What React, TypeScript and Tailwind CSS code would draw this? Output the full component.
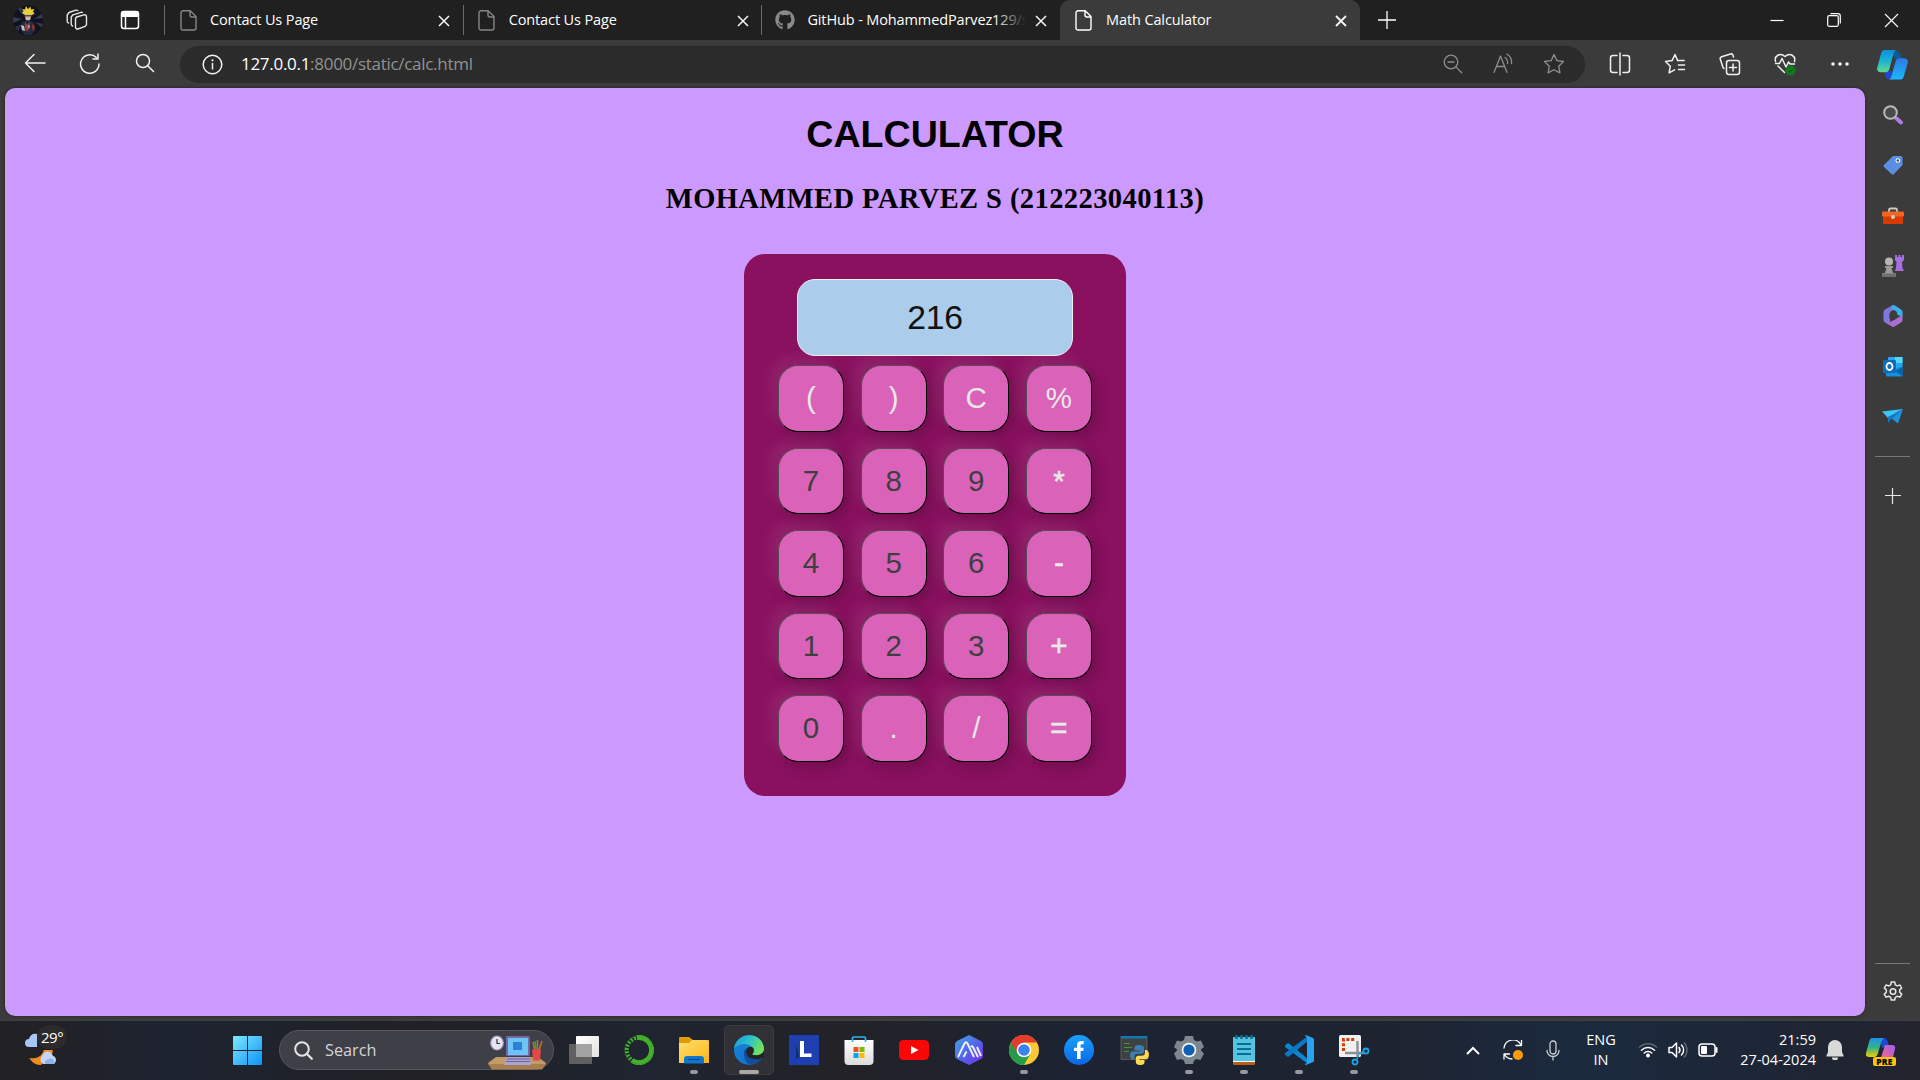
import React from "react";
import { FaGithub } from "react-icons/fa";

type Box = { w?: number; h?: number; vb?: string; className?: string; children?: React.ReactNode };

function Svg({ w = 24, h, vb, className = "", children }: Box) {
  const height = h ?? w;
  return (
    <svg
      width={w}
      height={height}
      viewBox={vb ?? `0 0 ${w} ${height}`}
      className={`shrink-0 ${className}`}
      fill="none"
      stroke="none"
    >
      {children}
    </svg>
  );
}

const line = { stroke: "currentColor", strokeWidth: 1.5, strokeLinecap: "round", strokeLinejoin: "round" } as const;

/* ---------- Tab strip ---------- */

function Avatar() {
  return (
    <Svg w={30} h={37}>
      <clipPath id="av"><ellipse cx="15" cy="18.500" rx="15" ry="15.200" /></clipPath>
      <g clipPath="url(#av)">
        <rect width="30" height="37" fill="#10121d" />
        <g transform="translate(0 3)">
          <path d="M0 12l9 2-9 4zM30 8l-9 6 9-1zM30 19l-8-2 8 7zM4 3l7 8-3-9z" fill="#333b52" />
          <path d="M2 22l7-3-4 8z" fill="#2a3146" />
          <path d="M9 8l1.500-2L9 4l3 .6L13 1l2 3 2.500-2.500.5 3 3.500-.5-1.500 2.500 1.500 2.500-3 1-1 2h-5l-1-2.500z" fill="#e8cf3c" />
          <path d="M12 10h6l-.5 4.500-2.500 1.500-2.500-1.500z" fill="#d8b79c" />
          <path d="M11.500 10h7v1.500h-7z" fill="#3c4a6e" />
          <path d="M9 17l4-1.500h4l4 2 1 8-4 5h-6l-4-5z" fill="#232a42" />
          <path d="M12 17l2 3 3-3-1 7-2 3-2-4z" fill="#9a4440" />
          <path d="M8 20l3 1 1 5-3-1zM15 20l2 1-1 3z" fill="#cfc3bd" />
          <path d="M19 19l3 2-1 5-2-2z" fill="#8a2f2f" />
        </g>
      </g>
    </Svg>
  );
}

function Workspaces() {
  return (
    <Svg w={22} h={24} vb="0 0 22 22" className="text-[#e6e6e6]">
      <g {...line} strokeWidth={1.400}>
        <path d="M10.500 8l7.500-2.200a2 2 0 0 1 2.500 1.900v8.100l-1.500 1.600-7 2.600a2 2 0 0 1-2.500-1.900V9.500z" />
        <path d="M6.500 17a2 2 0 0 1-1.300-1.900V8L7 5.800l8-2.500a2 2 0 0 1 1.500.2" />
        <path d="M2.500 14a2 2 0 0 1-1.300-1.800V6L3 3.500 10 1.200a2 2 0 0 1 1.800.3" />
      </g>
    </Svg>
  );
}

function TabActions() {
  return (
    <Svg w={20} h={20} className="text-white">
      <rect x="1.500" y="1.500" width="17" height="17" rx="2.500" {...line} />
      <path d="M1 3.500A2.500 2.500 0 0 1 3.500 1h13A2.500 2.500 0 0 1 19 3.500V7H1z" fill="currentColor" />
      <path d="M5.500 7v11" {...line} />
    </Svg>
  );
}

function PageIcon({ className = "text-[#858585]" }: { className?: string }) {
  return (
    <Svg w={17} h={21} className={className}>
      <path
        d="M3 .8h7.200L16 6.600V18a2 2 0 0 1-2 2H3a2 2 0 0 1-2-2V2.800a2 2 0 0 1 2-2zM10 1v4a2 2 0 0 0 2 2h4"
        {...line}
        strokeWidth={1.400}
      />
    </Svg>
  );
}

function Cross({ size = 10, width = 1.5 }: { size?: number; width?: number }) {
  return (
    <Svg w={size} h={size} vb="0 0 10 10" className="overflow-visible text-[#f5f5f5]">
      <path d="M0 0l10 10M10 0L0 10" stroke="currentColor" strokeWidth={(width * 10) / size} />
    </Svg>
  );
}

function Tab({ title, icon, fade }: { title: string; icon: React.ReactNode; fade?: boolean }) {
  return (
    <div className="flex h-10 w-[298.700px] items-center">
      <div className="h-[30px] w-px bg-[#6a6a6a]" />
      <div className="ml-[13px] flex w-5 justify-center">{icon}</div>
      <div className="relative ml-[12px] w-[219px] overflow-hidden whitespace-nowrap text-[14.500px] leading-5 tracking-[-0.120px] text-white">
        {title}
        {fade && <div className="absolute inset-y-0 right-0 w-8 bg-gradient-to-r from-transparent to-[#202020]" />}
      </div>
      <div className="ml-[10px] mt-[2px]">
        <Cross />
      </div>
    </div>
  );
}

function TabStrip() {
  return (
    <div className="flex h-10 items-center bg-[#202020]">
      <div className="flex h-10 w-[164px] items-center">
        <div className="ml-[13px]"><Avatar /></div>
        <div className="ml-[23px]"><Workspaces /></div>
        <div className="ml-[32px]"><TabActions /></div>
      </div>
      <Tab title="Contact Us Page" icon={<PageIcon />} />
      <Tab title="Contact Us Page" icon={<PageIcon />} />
      <Tab title="GitHub - MohammedParvez129/s" fade icon={<FaGithub size={20} className="text-[#8a8a8a]" />} />
      <div className="flex items-end self-stretch bg-[#3b3b3b]">
        <div className="flex h-10 w-[300px] items-center rounded-t-[10px] bg-[#3b3b3b] shadow-[0_-10px_0_#202020]">
          <div className="ml-[15px]"><PageIcon className="text-white" /></div>
          <div className="ml-[14px] w-[224px] whitespace-nowrap text-[14.500px] leading-5 tracking-[-0.120px] text-white">
            Math Calculator
          </div>
          <div className="ml-[6px] mt-[2px]"><Cross width={1.8} /></div>
        </div>
      </div>
      <div className="flex h-10 flex-1 items-center rounded-bl-[10px] bg-[#202020]">
        <div className="ml-[18px]">
          <Svg w={18} h={18} className="text-white"><path d="M9 0v18M0 9h18" stroke="currentColor" strokeWidth="1.300" /></Svg>
        </div>
        <div className="flex-1" />
        <Svg w={14} h={14} className="text-white"><path d="M0.500 7.500h13" stroke="currentColor" strokeWidth="1.200" /></Svg>
        <Svg w={14} h={14} className="ml-[43px] text-white">
          <rect x=".7" y="2.700" width="10.600" height="10.600" rx="1.500" stroke="currentColor" strokeWidth="1.200" />
          <path d="M3.500.7h7.500a2.300 2.300 0 0 1 2.300 2.300v7.500" stroke="currentColor" strokeWidth="1.200" />
        </Svg>
        <div className="ml-[44px] mr-[22px]"><Cross size={13} width={1.200} /></div>
      </div>
    </div>
  );
}

/* ---------- Address bar ---------- */

function Cell({ children }: { children: React.ReactNode }) {
  return <div className="flex w-[55px] justify-center">{children}</div>;
}

function CopilotLogo({ size = 32 }: { size?: number }) {
  return (
    <Svg w={size} vb="0 0 32 32">
      <defs>
        <linearGradient id="cp1" x1="0" y1="0" x2="0" y2="1">
          <stop offset="0" stopColor="#0c8fe0" /><stop offset=".5" stopColor="#1db4d4" /><stop offset="1" stopColor="#62d88f" />
        </linearGradient>
        <linearGradient id="cp2" x1="0" y1="0" x2="0" y2="1">
          <stop offset="0" stopColor="#2f79e6" /><stop offset="1" stopColor="#18b8fb" />
        </linearGradient>
      </defs>
      <path d="M16 2h4c2.500 0 3.500 1 4 3l1.500 4.500-7 2z" fill="#0d5b94" />
      <path d="M8 23h8l-2.500 8H12c-2 0-3-2-3.500-3.500z" fill="#2346d8" />
      <path d="M7.500 1H20c-2 1-2.500 2-3 4l-4.300 16c-.7 2-2 3-4 3H4c-3 0-4.500-2-3.700-5L4 5.500C4.600 3 5.500 1 7.500 1z" fill="url(#cp1)" />
      <path d="M24.500 31.500H12c2-1 2.500-2 3-4l4.300-15c.7-2 2-3 4-3H28c3 0 4.500 2 3.700 5L28 27c-.6 2.500-1.500 4.500-3.500 4.500z" fill="url(#cp2)" />
    </Svg>
  );
}

const starPath = "M11 1.500l2.900 6.100 6.600.9-4.800 4.700 1.200 6.700L11 16.700l-5.900 3.200 1.200-6.700L1.500 8.500l6.600-.9z";

function AddressBar() {
  return (
    <div className="flex h-[48px] items-center bg-[#3b3b3b] text-[#f0f0f0]">
      <div className="ml-[7px] flex">
        <Cell>
          <Svg w={22} h={20}><path d="M21 10H1.500M10 1.500L1.500 10l8.500 8.500" {...line} /></Svg>
        </Cell>
        <Cell>
          <Svg w={22} h={22}><path d="M20 11a9.200 9.200 0 1 1-2.800-6.600M19 1v5h-5" {...line} /></Svg>
        </Cell>
        <Cell>
          <Svg w={20} h={20}><circle cx="8" cy="8" r="6.500" {...line} /><path d="M12.700 12.700l5.800 5.800" {...line} /></Svg>
        </Cell>
      </div>
      <div className="ml-[8px] flex h-[37px] w-[1405px] items-center rounded-full bg-[#2b2b2b]">
        <div className="ml-[22px]">
          <Svg w={21} h={21}>
            <circle cx="10.500" cy="10.500" r="9.300" {...line} />
            <path d="M10.500 9.500v5.500" {...line} /><circle cx="10.500" cy="6.300" r="1.100" fill="currentColor" />
          </Svg>
        </div>
        <div className="ml-[18px] flex-1 whitespace-nowrap text-[17px] leading-6 tracking-[-0.290px] text-[#929292]">
          <span className="text-white">127.0.0.1</span>:8000/static/calc.html
        </div>
        <div className="mr-[20px] flex items-center text-[#8d8d8d]">
          <Svg w={20} h={20}>
            <circle cx="8" cy="8" r="6.800" {...line} strokeWidth={1.300} />
            <path d="M12.900 12.900l5.800 5.800M5 8h6" {...line} strokeWidth={1.300} />
          </Svg>
          <Svg w={22} h={22} className="ml-[30px]">
            <path d="M1 19.500L7.500 3 14 19.500M3.500 13.500h8" {...line} strokeWidth={1.300} />
            <path d="M12 4.500a6 6 0 0 1 2.500 6M14 1a10 10 0 0 1 4.500 9.500" {...line} strokeWidth={1.300} />
          </Svg>
          <Svg w={22} h={22} className="ml-[28px]"><path d={starPath} {...line} strokeWidth={1.300} /></Svg>
        </div>
      </div>
      <div className="ml-[7px] flex items-center">
        <Cell>
          <Svg w={22} h={24}>
            <path d="M8 3.500H4A2.500 2.500 0 0 0 1.500 6v12A2.500 2.500 0 0 0 4 20.500h4M14 3.500h4A2.500 2.500 0 0 1 20.500 6v12a2.500 2.500 0 0 1-2.500 2.500h-4M11 1v22" {...line} />
          </Svg>
        </Cell>
        <Cell>
          <Svg w={22} h={22}>
            <path d="M13.700 7.600L11 1.500 8.100 7.600 1.500 8.500l4.800 4.700-1.200 6.700 5.500-3M13.700 7.600h6.500M14.500 12h6M14.500 16.500h6" {...line} />
          </Svg>
        </Cell>
        <Cell>
          <Svg w={22} h={23}>
            <rect x="7.500" y="7.500" width="13" height="14" rx="2.500" {...line} />
            <path d="M14 11v7M10.500 14.500h7M5 15.500l-1-1L1.300 6.300a2 2 0 0 1 1.300-2.500L11.500 1a2 2 0 0 1 2.500 1.300l.5 1.700" {...line} />
          </Svg>
        </Cell>
        <Cell>
          <Svg w={22} h={24}>
            <path d="M1.500 9.500C0 4 6 0 11 4.500 16 0 22 4 20.500 9.500M4 14l6.500 6.500M1.500 11.500h4l2.500-5 4 8.500 2.500-5 1.500 2h4.500" {...line} />
            <circle cx="16.500" cy="18.500" r="5" fill="#117a1b" />
            <path d="M14.500 19l1.300 1.300 2.700-3" stroke="#0b4a10" strokeWidth="1" />
          </Svg>
        </Cell>
        <Cell>
          <Svg w={18} h={4}>
            <circle cx="2" cy="2" r="1.800" fill="currentColor" /><circle cx="9" cy="2" r="1.800" fill="currentColor" /><circle cx="16" cy="2" r="1.800" fill="currentColor" />
          </Svg>
        </Cell>
      </div>
      <div className="ml-[10px]"><CopilotLogo size={31} /></div>
    </div>
  );
}

/* ---------- Calculator page ---------- */

const keys = ["(", ")", "C", "%", "7", "8", "9", "*", "4", "5", "6", "-", "1", "2", "3", "+", "0", ".", "/", "="];

function keyText(k: string) {
  if (/\d/.test(k)) return "text-[#3f3f3f]";
  return /[*+=-]/.test(k) ? "text-[#e8e8e8] [-webkit-text-stroke:0.6px_#e8e8e8]" : "text-[#e8e8e8]";
}

function Calculator() {
  return (
    <div className="mt-[38px] h-[542px] w-[382px] rounded-[21px] bg-[#8a1060] pt-[25px]">
      <div className="mx-auto flex h-[77px] w-[276px] items-center justify-center rounded-[18px] border border-[#f3eef6] bg-[#abccea] text-[33.750px] tracking-[-0.300px] text-[#111]">
        216
      </div>
      <div className="ml-[34px] mt-[9px] grid w-[314px] grid-cols-4 gap-x-[16.500px] gap-y-[16px]">
        {keys.map((k) => (
          <button
            key={k}
            className={`flex h-[66.500px] w-[66px] items-center justify-center rounded-[20px] border border-b-black border-l-[#5c4a58] border-r-black border-t-[#5c4a58] bg-[#da62b9] pb-px text-[29.500px] leading-none shadow-[-8px_-8px_15px_rgba(255,255,255,0.08),5px_5px_15px_rgba(0,0,0,0.2)] ${keyText(k)}`}
          >
            {k}
          </button>
        ))}
      </div>
    </div>
  );
}

function Page() {
  return (
    <main className="ml-[5px] flex h-[928px] w-[1860px] flex-col items-center rounded-[10px] bg-[#cc99ff] font-['Liberation_Sans',Arial,sans-serif] text-black shadow-[0_0_3px_rgba(0,0,0,0.5)]">
      <h1 className="mt-[25px] text-[37.600px] font-bold leading-[43px]">CALCULATOR</h1>
      <h2 className="mt-[26px] font-['Liberation_Serif','Times_New_Roman',serif] text-[28.500px] font-bold leading-[34px] tracking-[0.420px]">
        MOHAMMED PARVEZ S (212223040113)
      </h2>
      <Calculator />
    </main>
  );
}

/* ---------- Edge sidebar ---------- */

function SideItem({ children }: { children: React.ReactNode }) {
  return <div className="flex h-[50.300px] items-center pt-1">{children}</div>;
}

function Sidebar() {
  return (
    <aside className="flex w-[35px] flex-col items-center text-[#e8e8e8]">
      <SideItem>
        <Svg w={20} h={20}>
          <path d="M13.500 13.500l4.500 4" stroke="#b57ae6" strokeWidth="4" strokeLinecap="round" />
          <circle cx="7.500" cy="7.500" r="6.300" stroke="#b9b9b9" strokeWidth="2" fill="#4a4a4a" />
        </Svg>
      </SideItem>
      <SideItem>
        <Svg w={20} h={20}>
          <path d="M10 1h7.500A2 2 0 0 1 19.500 3v7L11 19a2 2 0 0 1-2.500 0L1 12a1.500 1.500 0 0 1 0-2z" fill="#5b8fe3" />
          <circle cx="14.800" cy="5.500" r="2.300" fill="#fff" /><circle cx="14.800" cy="5.500" r="1.200" fill="#444" />
        </Svg>
      </SideItem>
      <SideItem>
        <Svg w={22} h={18}>
          <path d="M7 5V3a1.500 1.500 0 0 1 1.500-1.500h5A1.500 1.500 0 0 1 15 3v2" stroke="#c9c9c9" strokeWidth="1.800" />
          <rect x="1" y="5" width="20" height="12" rx="1" fill="#d83b01" />
          <rect x="0" y="4.500" width="22" height="5" rx="1" fill="#f26522" />
          <circle cx="11" cy="10" r="2" fill="#cfcfcf" />
        </Svg>
      </SideItem>
      <SideItem>
        <Svg w={22} h={22}>
          <path d="M13 0h2v2h1.500V0h2v2H20V0h2v5l-2 2 .5 6 1.500 3h-9l1-3 .5-6-1.500-2z" fill="#a56fe0" />
          <circle cx="7" cy="6.500" r="4" fill="#b5b5b5" />
          <path d="M3 11h8v2H9.500l1.500 5h2a1 1 0 0 1 1 1v2a1 1 0 0 1-1 1H1a1 1 0 0 1-1-1v-2a1 1 0 0 1 1-1h2l1.500-5H3z" fill="#9a9a9a" />
          <path d="M0 18.500h14V21a1 1 0 0 1-1 1H1a1 1 0 0 1-1-1z" fill="#6f6f6f" />
        </Svg>
      </SideItem>
      <SideItem>
        <Svg w={20} h={22}>
          <path d="M10 0L2 4.500A3 3 0 0 0 .5 7v8a3 3 0 0 0 1.500 2.500l3 1.500c1 0 2-.5 2-2V8a2 2 0 0 1 1-1.700L12 4z" fill="#7f78dc" />
          <path d="M9 .5a3 3 0 0 1 3 0L18 4.500A3 3 0 0 1 19.500 7v5L14 9.500V8a2 2 0 0 0-1-1.700L8 3.500z" fill="#38b0e8" />
          <path d="M19.500 10v5a3 3 0 0 1-1.500 2.500L12 21.300a3 3 0 0 1-3.500 0L3 18c2 .5 4-.5 5-1.500l6-3.500z" fill="#a96fd0" />
          <path d="M10 6.500l4 2.200v4.600l-4 2.200-3.700-2.200V8.700z" fill="#3b3b3b" />
        </Svg>
      </SideItem>
      <SideItem>
        <Svg w={20} h={20}>
          <rect x="5" y="0" width="14.500" height="12" rx="1" fill="#28a8ea" />
          <rect x="12" y="0" width="7.500" height="6" fill="#50d9ff" />
          <path d="M3 9l8 3 8.500-3v9a1.500 1.500 0 0 1-1.500 1.500H4.500A1.500 1.500 0 0 1 3 18z" fill="#1490df" />
          <path d="M19.500 10v9L12 14z" fill="#0a5fa8" />
          <rect x="0" y="3" width="13" height="13" rx="1.200" fill="#0f6cbd" />
          <ellipse cx="6.500" cy="9.500" rx="3" ry="3.500" stroke="#fff" strokeWidth="1.800" />
        </Svg>
      </SideItem>
      <SideItem>
        <Svg w={21} h={16}>
          <path d="M0 2.500L21 0 6 9z" fill="#3cc4f4" /><path d="M21 0l-5 14.500L9 9z" fill="#1b93e0" /><path d="M21 0L6 8v6l3.500-4z" fill="#1277bd" />
        </Svg>
      </SideItem>
      <div className="mt-[16px] h-px w-[35px] bg-[#777]" />
      <Svg w={16} h={16} className="mt-[31px]"><path d="M7.500 0v16M0 7.500h16" stroke="currentColor" strokeWidth="1.200" /></Svg>
      <div className="flex-1" />
      <div className="h-px w-[35px] bg-[#777]" />
      <Svg w={22} h={22} className="mb-[17px] mt-[17px]">
        <path
          d="M9.300 1h3.400l.6 2.800 2 1.100 2.700-.9 1.700 3-2 1.900v2.300l2 1.900-1.700 3-2.700-.9-2 1.100-.6 2.700H9.300l-.6-2.700-2-1.100-2.700.9-1.700-3 2-1.900V8.900l-2-1.900L4 4l2.700.9 2-1.100z"
          {...line}
        />
        <circle cx="11" cy="10.500" r="2.800" {...line} />
      </Svg>
    </aside>
  );
}

/* ---------- Taskbar ---------- */

function Weather() {
  return (
    <div className="relative ml-[25px] h-[36px] w-[42px]">
      <Svg w={42} h={36}>
        <path d="M4 15a4 4 0 0 1 0-8c1-4 4-6 8-5v13z" fill="#a8c6f5" />
        <path d="M28 19A14 14 0 0 1 4 26c7 1 13-1 15-8z" fill="#f28a1c" />
        <path d="M28 18h-9a12 12 0 0 1-14 9 13 13 0 0 0 11 6z" fill="#f28a1c" />
        <path d="M18 32a5 5 0 0 1-1-8c2-6 9-6 11 0a4.200 4.200 0 0 1 0 8z" fill="#c3d6f8" />
        <path d="M20 32a4 4 0 0 1 4-5c3-2 6 1 5.500 5z" fill="#8fb2ea" />
      </Svg>
      <span className="absolute left-[12px] top-[-7px] rounded-full bg-[#2c2a2a] px-1 text-[15px] leading-[24px] tracking-[-0.500px] text-white">29°</span>
    </div>
  );
}

function SearchArt() {
  return (
    <Svg w={58} h={36}>
      <path d="M8 22h42l8 6-4 6H4l-4-6z" fill="#c49a68" /><path d="M0 29h58l-4 5.500H4z" fill="#a87f50" />
      <ellipse cx="9" cy="8" rx="6.300" ry="7" fill="#e7e4f2" stroke="#a29bc0" strokeWidth="1.200" /><path d="M9 4v4.500h3" stroke="#333" strokeWidth="1.200" />
      <rect x="18" y="1" width="24" height="20" rx="1.500" fill="#7468a8" /><rect x="20" y="3" width="20" height="17" fill="#6cc3f4" /><rect x="25" y="7" width="9" height="8" fill="#2b81d2" />
      <path d="M19 22h23l1 8H16z" fill="#aaa3cf" /><path d="M19 24h23M18 26.500h24" stroke="#6b6296" strokeWidth="1" />
      <path d="M47 16l-2-9M49.500 15V5M51 15l3-9" stroke="#b8742e" strokeWidth="1.600" /><path d="M48 14l-1-8" stroke="#3a9b58" strokeWidth="1.600" />
      <path d="M44 14.500h9l-1 11h-7z" fill="#e5484a" />
    </Svg>
  );
}

const taskIcons: { art: React.ReactNode; running?: boolean; active?: boolean }[] = [
  {
    art: (
      <Svg w={30} h={30}>
        <defs>
          <linearGradient id="tv1" x1="0" y1="0" x2="1" y2="1"><stop offset="0" stopColor="#fff" /><stop offset="1" stopColor="#e3e3e3" /></linearGradient>
        </defs>
        <rect x="0" y="9" width="23" height="20" rx="1" fill="#606060" />
        <rect x="7" y="1" width="23" height="21" rx="1" fill="url(#tv1)" />
        <rect x="7" y="9" width="16" height="13" fill="#a3a3a3" />
      </Svg>
    ),
  },
  {
    art: (
      <Svg w={30} h={30}>
        <path d="M13 2.600A12.600 12.600 0 1 1 8 25.500" stroke="#43b02a" strokeWidth="5" />
        <circle cx="15" cy="15" r="12.300" stroke="#43b02a" strokeWidth="4" strokeDasharray="2 1.500" />
        <circle cx="15" cy="15" r="14.200" stroke="#2f8f20" strokeWidth="1" strokeDasharray="1.500 2" />
      </Svg>
    ),
  },
  {
    running: true,
    art: (
      <Svg w={30} h={30}>
        <defs><linearGradient id="fo" x1="0" y1="0" x2="1" y2="1"><stop offset="0" stopColor="#ffdf70" /><stop offset="1" stopColor="#fbb615" /></linearGradient></defs>
        <path d="M0 3a1 1 0 0 1 1-1h9l4 3v6H0z" fill="#e09b08" />
        <path d="M0 8h10l3-3h16a1 1 0 0 1 1 1v22H0z" fill="url(#fo)" />
        <path d="M5 28.500V24a3 3 0 0 1 3-3h14a3 3 0 0 1 3 3v4.500z" fill="#1177cc" /><path d="M9 24.500h12" stroke="#0a4a8c" strokeWidth="1.200" />
      </Svg>
    ),
  },
  {
    active: true,
    art: (
      <Svg w={30} h={30}>
        <defs>
          <linearGradient id="e1" x1="0" y1="0" x2="1" y2=".4"><stop offset="0" stopColor="#1597d8" /><stop offset=".55" stopColor="#2fc3c8" /><stop offset="1" stopColor="#6fe25a" /></linearGradient>
          <linearGradient id="e2" x1="0" y1="0" x2=".5" y2="1"><stop offset="0" stopColor="#1a86dc" /><stop offset="1" stopColor="#1272cc" /></linearGradient>
        </defs>
        <circle cx="15" cy="15" r="15" fill="url(#e2)" />
        <path d="M12 13c-4 5-2 12 3 16.500 6 .5 10-2 13-6.500-4 2-12 2-15-4-1-2-1.500-4-1-6z" fill="#104f99" />
        <path d="M18 19.500c2-1.500 2-4 1.500-6-2-4-11-8-19.500 0C2-3 28-5 30 13.500c0 6-5 7-9 7-1.500 0-2.500 0-3-1z" fill="url(#e1)" />
        <path d="M18 19.500c2-1.500 2-4 1.500-6-1-2-5-3-7 .5-1 3 0 5 1 7 2 3 10 4.500 14.500 2 1-.5 1.500 0 1 .700L31 20l-1-4c-3 4.500-8 5-12 3.500z" fill="#23242a" />
      </Svg>
    ),
  },
  {
    art: (
      <Svg w={30} h={30}>
        <rect width="30" height="30" fill="#1f3eb0" /><path d="M10 22L7 24V9z" fill="#0a2f6a" />
        <path d="M11 6h4v12.500h7.500V22H11z" fill="#fff" />
      </Svg>
    ),
  },
  {
    art: (
      <Svg w={30} h={30}>
        <defs><linearGradient id="st" x1="0" y1="0" x2="0" y2="1"><stop offset="0" stopColor="#fff" /><stop offset="1" stopColor="#dcdcdc" /></linearGradient></defs>
        <path d="M.5 5h29v21a4 4 0 0 1-4 4h-21a4 4 0 0 1-4-4z" fill="url(#st)" />
        <path d="M8.500 7V3a1 1 0 0 1 1-1h11a1 1 0 0 1 1 1v4" stroke="#28b4ef" strokeWidth="1.700" />
        <rect x="9.500" y="12" width="5" height="5" fill="#f25022" /><rect x="15.500" y="12" width="5" height="5" fill="#7fba00" />
        <rect x="9.500" y="18" width="5" height="5" fill="#00a4ef" /><rect x="15.500" y="18" width="5" height="5" fill="#ffb900" />
      </Svg>
    ),
  },
  {
    art: (
      <Svg w={30} h={30}><rect y="5" width="30" height="20" rx="4.500" fill="#f90606" /><path d="M12 11l7.500 4-7.500 4z" fill="#fff" /></Svg>
    ),
  },
  {
    art: (
      <Svg w={30} h={30}>
        <defs><linearGradient id="ax" x1="0" y1="0" x2="1" y2="1"><stop offset="0" stopColor="#43a6e8" /><stop offset=".5" stopColor="#5068e8" /><stop offset="1" stopColor="#7a2ae8" /></linearGradient></defs>
        <path d="M15 0l12 6q2 1 2 3.500v11q0 2.500-2 3.500l-12 6-12-6q-2-1-2-3.500v-11Q1 7 3 6z" fill="url(#ax)" />
        <path d="M4 22L10.500 8.500q1.500-2.500 3 0L20 22M9.500 22l3-5.500M17 12q1-1.500 2 0l5 10M23 12l4 9" stroke="#f2f2ff" strokeWidth="1.900" />
      </Svg>
    ),
  },
  {
    running: true,
    art: (
      <Svg w={30} h={30}>
        <circle cx="15" cy="15" r="15" fill="#fcc934" />
        <path d="M15 15L2 7.500A15 15 0 0 0 15 30l6.500-11.300z" fill="#249c48" />
        <path d="M2 7.500A15 15 0 0 1 28 7.500H15v7.500l-6.500 3.700z" fill="#e33b2e" />
        <circle cx="15" cy="15" r="7.300" fill="#fff" /><circle cx="15" cy="15" r="5.800" fill="#3b82f0" />
      </Svg>
    ),
  },
  {
    art: (
      <Svg w={30} h={30}>
        <defs><linearGradient id="fb" x1="0" y1="0" x2="0" y2="1"><stop offset="0" stopColor="#19a0fb" /><stop offset="1" stopColor="#0a66e4" /></linearGradient></defs>
        <circle cx="15" cy="15" r="15" fill="url(#fb)" />
        <path d="M13 24v-8h-3v-3.300h3v-2c0-3.200 1.600-4.700 4.400-4.700h2.300v3.200h-1.600c-1.200 0-1.500.6-1.500 1.600v1.900h3.100l-.5 3.300h-2.600v8z" fill="#fff" />
      </Svg>
    ),
  },
  {
    art: (
      <Svg w={30} h={30}>
        <rect x="2" y="1.500" width="26" height="23" fill="#3e4142" stroke="#777" strokeWidth=".6" /><rect x="2" y="1" width="26" height="2.500" fill="#1178b8" />
        <path d="M5 8.500h6M5 12.500h8M5 16.500h5" stroke="#3d9440" strokeWidth="1.200" />
        <path d="M20 10c-3.500 0-4.500 1.300-4.500 3v2.500h5v1h-7c-3 0-3.500 7 0 8h2v-3c0-2 1.500-2.700 3-2.700h4c1.500 0 2.500-1 2.500-2.500V13c0-2-1.500-3-5-3z" fill="#3d7fb5" />
        <path d="M21 30c3.500 0 4.500-1.300 4.500-3v-2h-5v-1h7c3 0 3.500-8 0-9H26v3c0 2-1.500 2.700-3 2.700h-3.500c-1.500 0-2.700 1-2.700 2.500V27c0 2 1.500 3 4.200 3z" fill="#ffd94c" />
      </Svg>
    ),
  },
  {
    running: true,
    art: (
      <Svg w={30} h={30}>
        <path d="M11 1h8l1 4 3 1.500 4-1L30 12l-3 2.500v1l3 3-3.500 6.500-4-1L20 25.500 19 29h-8l-1-3.500L7 24l-4 1-3-6.500 3-3v-1L0 12l3-6.500 4 1L10 5z" fill="#7d8790" />
        <circle cx="15" cy="15" r="7.300" fill="#f0f4f7" /><circle cx="15" cy="15" r="5.600" fill="#0f5fb2" />
      </Svg>
    ),
  },
  {
    running: true,
    art: (
      <Svg w={30} h={30}>
        <rect x="4" y="25" width="22" height="5" rx="1" fill="#b65d16" /><rect x="4" y="23" width="22" height="4" fill="#f5f5f5" />
        <rect x="4" y="2" width="22" height="24" rx="1" fill="#55c4e0" />
        <path d="M7.500 0v4M12.500 0v4M17.500 0v4M22.500 0v4" stroke="#0b6d94" strokeWidth="2.500" />
        <path d="M8 9h14M8 14h14M8 19h14" stroke="#0b6d94" strokeWidth="1.800" />
      </Svg>
    ),
  },
  {
    running: true,
    art: (
      <Svg w={30} h={30}>
        <path d="M1 10.500L3 8.500q1-.5 2 0L24 24v5L1 12z" fill="#0a86d2" />
        <path d="M1 19.500L3 21.500q1 .5 2 0L24 6V1L1 18z" fill="#0a78c4" />
        <path d="M22 0l7 3q1 .5 1 1.500v21q0 1-1 1.500l-7 3-1.500-1q2.500 0 2.500-2V3q0-2-2.500-2z" fill="#28a3f2" />
      </Svg>
    ),
  },
  {
    running: true,
    art: (
      <Svg w={30} h={30} className="overflow-visible">
        <rect x="0" y="0" width="22" height="22" rx="1.500" fill="#f0f0f0" />
        <path d="M4.500 16V4.500h12" stroke="#d83b01" strokeWidth="3" strokeDasharray="3 1.800" />
        <path d="M18.500 6v16M6 18h19" stroke="#8a9098" strokeWidth="2.400" />
        <circle cx="27" cy="16" r="2.500" stroke="#1ba0ea" strokeWidth="1.800" /><circle cx="16" cy="27" r="2.500" stroke="#1ba0ea" strokeWidth="1.800" />
        <path d="M18 24l1.500-4M20 19l4.500-2" stroke="#1ba0ea" strokeWidth="1.500" />
      </Svg>
    ),
  },
];

function CopilotPre() {
  return (
    <div className="relative h-[30px] w-[30px]">
      <Svg w={30} h={30}>
        <defs>
          <linearGradient id="k1" x1="0" y1="0" x2="0" y2="1"><stop offset="0" stopColor="#1b93e8" /><stop offset=".5" stopColor="#36b08a" /><stop offset="1" stopColor="#f0d000" /></linearGradient>
          <linearGradient id="k2" x1="1" y1="0" x2="0" y2="1"><stop offset="0" stopColor="#a05cf0" /><stop offset="1" stopColor="#ff6a80" /></linearGradient>
        </defs>
        <path d="M14 1h4q3 0 4 5l1 3-7 2z" fill="#1c48d8" />
        <path d="M6 1h12q-2 1-3 5l-3 10q-1 4-4 4H3q-4 0-3-4L3 5q1-4 3-4z" fill="url(#k1)" />
        <path d="M19 8h7q4 0 3 4l-3 12H14z" fill="url(#k2)" />
      </Svg>
      <span className="absolute left-[7px] top-[20px] w-[23px] rounded-[2px] bg-[#fcc40d] text-center text-[8.500px] font-extrabold leading-[9px] tracking-[0.300px] text-black">PRE</span>
    </div>
  );
}

function Tray() {
  return (
    <div className="flex items-center text-white">
      <Svg w={14} h={9}><path d="M1 8l6-6 6 6" stroke="currentColor" strokeWidth="2" /></Svg>
      <Svg w={20} h={20} className="ml-[23px]">
        <path d="M1 8a9 9 0 0 1 17-3M18.500 0v5.500H13M1 19v-5h5.500M1.500 14.500A9 9 0 0 0 9 19" {...line} strokeWidth={1.300} />
        <circle cx="15" cy="15" r="5" fill="#ff9a08" />
      </Svg>
      <Svg w={14} h={21} className="ml-[23px] text-[#c8ccd2]">
        <rect x="4" y="1" width="6" height="13" rx="3" {...line} strokeWidth={1.300} />
        <path d="M1 10.500a6 6 0 0 0 12 0M7 16.500V20" {...line} strokeWidth={1.300} />
      </Svg>
      <div className="ml-[21px] w-[40px] text-center text-[14.500px] leading-5">ENG<br />IN</div>
      <Svg w={20} h={16} className="ml-[17px]">
        <path d="M1 5.500a12.700 12.700 0 0 1 18 0" stroke="#5a6470" strokeWidth="1.500" />
        <path d="M3.500 8.200a9.200 9.200 0 0 1 13 0M6.200 11a5.500 5.500 0 0 1 7.600 0" {...line} />
        <circle cx="10" cy="13.600" r="2" fill="currentColor" />
      </Svg>
      <Svg w={20} h={18} className="ml-[10px]">
        <path d="M1 6.500h3L8.500 2v14L4 11.500H1z" {...line} />
        <path d="M11 6.500a4 4 0 0 1 0 5M13.500 4a7 7 0 0 1 0 10" {...line} />
        <path d="M16 1.500a11 11 0 0 1 0 15" stroke="#5a6470" strokeWidth="1.500" />
      </Svg>
      <Svg w={20} h={14} className="ml-[10px]">
        <rect x="1" y="1" width="16" height="12" rx="3" {...line} /><rect x="3" y="3" width="6" height="8" rx="1" fill="currentColor" />
        <path d="M18.500 5v4" stroke="currentColor" strokeWidth="2" strokeLinecap="round" />
      </Svg>
      <div className="w-[98px] text-right text-[14.500px] leading-5">21:59<br />27-04-2024</div>
      <Svg w={18} h={20} className="ml-[10px] text-[#d9d9d9]">
        <path d="M9 0a7 7 0 0 1 7 7v5l1.500 3.500v1H.5v-1L2 12V7a7 7 0 0 1 7-7zM6 17.500h6a3 3 0 0 1-6 0z" fill="currentColor" />
      </Svg>
      <div className="ml-[22px] mr-[24px] mt-[3px]"><CopilotPre /></div>
    </div>
  );
}

function Taskbar() {
  return (
    <footer className="flex h-[60px] items-center border-t border-[#3d3f45] bg-[linear-gradient(90deg,#222124_0%,#1d2330_9%,#212125_22%,#1f2430_34%,#222227_44%,#1d2333_56%,#1e2330_72%,#1b2a3e_82%,#1d2636_92%,#23232d_100%)] pb-px">
      <Weather />
      <Svg w={29} h={29} className="ml-[166px]">
        <defs><linearGradient id="wn" x1="0" y1="0" x2="1" y2="1"><stop offset="0" stopColor="#7ee8fd" /><stop offset="1" stopColor="#0d93f7" /></linearGradient></defs>
        <path d="M0 1a1 1 0 0 1 1-1h13v14H0zM15 0h13a1 1 0 0 1 1 1v13H15zM0 15h14v14H1a1 1 0 0 1-1-1zM15 15h14v13a1 1 0 0 1-1 1H15z" fill="url(#wn)" />
      </Svg>
      <div className="ml-[17px] flex h-10 w-[275px] items-center rounded-full border border-[#55565e] bg-[#3f3f48]">
        <Svg w={19} h={19} className="ml-[14px] text-[#e6e6e6]">
          <circle cx="8" cy="8" r="6.800" stroke="currentColor" strokeWidth="2" /><path d="M12.800 12.800l5 5" stroke="currentColor" strokeWidth="2.200" strokeLinecap="round" />
        </Svg>
        <span className="ml-[12px] flex-1 text-[16.300px] leading-6 text-[#d4d4d6]">Search</span>
        <div className="mr-[7px] mt-[6px]"><SearchArt /></div>
      </div>
      <div className="ml-[2.500px] flex">
        {taskIcons.map((t, i) => (
          <div key={i} className="flex w-[55px] justify-center">
            <div
              className={`relative flex h-[50px] w-[50px] items-center justify-center rounded-[5px] ${
                t.active ? "border border-[#3c3c42] bg-[#303036]" : ""
              }`}
            >
              {t.art}
              {t.active && <div className="absolute bottom-0 h-1 w-5 rounded-full bg-[#a9a8a5]" />}
              {t.running && <div className="absolute bottom-px h-1 w-2 rounded-full bg-[#96989e]" />}
            </div>
          </div>
        ))}
      </div>
      <div className="flex-1" />
      <Tray />
    </footer>
  );
}

export default function App() {
  return (
    <div className="flex h-[1080px] w-[1920px] flex-col overflow-hidden bg-[#3b3b3b] font-['Open_Sans','Noto_Sans',sans-serif]">
      <TabStrip />
      <AddressBar />
      <div className="flex h-[932px]">
        <Page />
        <div className="ml-[10px] flex"><Sidebar /></div>
      </div>
      <Taskbar />
    </div>
  );
}
